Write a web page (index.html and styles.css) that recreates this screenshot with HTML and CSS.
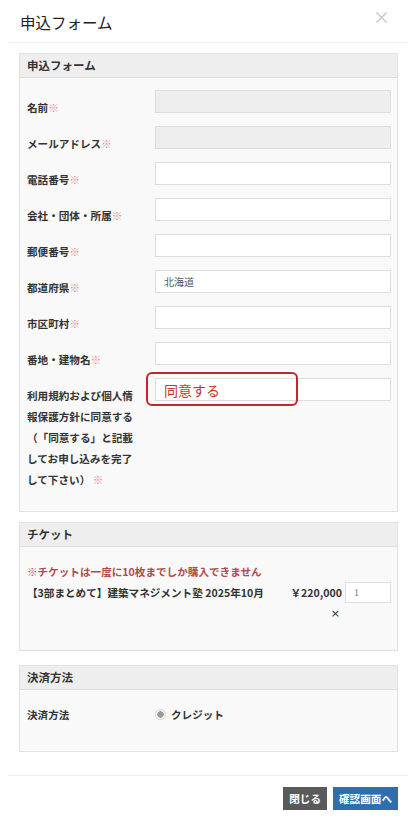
FILE: index.html
```html
<!DOCTYPE html>
<html lang="ja">
<head>
  <meta charset="UTF-8" />
  <meta name="viewport" content="width=device-width, initial-scale=1.0"/>
  <title>申込フォーム</title>
  <link rel="stylesheet" href="styles.css">
</head>
<body>
  <div class="modal">
    <div class="modal-header">
      <h4 class="modal-title">申込フォーム</h4>
      <span class="close">&times;</span>
    </div>

    <div class="modal-body">
      <div class="panel">
        <div class="panel-heading">申込フォーム</div>
        <div class="panel-body">
          <div class="form-row">
            <label class="control-label">名前<span class="req">※</span></label>
            <div class="control"><input class="form-control" type="text" disabled></div>
          </div>
          <div class="form-row">
            <label class="control-label">メールアドレス<span class="req">※</span></label>
            <div class="control"><input class="form-control" type="text" disabled></div>
          </div>
          <div class="form-row">
            <label class="control-label">電話番号<span class="req">※</span></label>
            <div class="control"><input class="form-control" type="text"></div>
          </div>
          <div class="form-row">
            <label class="control-label">会社・団体・所属<span class="req">※</span></label>
            <div class="control"><input class="form-control" type="text"></div>
          </div>
          <div class="form-row">
            <label class="control-label">郵便番号<span class="req">※</span></label>
            <div class="control"><input class="form-control" type="text"></div>
          </div>
          <div class="form-row">
            <label class="control-label">都道府県<span class="req">※</span></label>
            <div class="control"><input class="form-control" type="text" value="北海道"></div>
          </div>
          <div class="form-row">
            <label class="control-label">市区町村<span class="req">※</span></label>
            <div class="control"><input class="form-control" type="text"></div>
          </div>
          <div class="form-row">
            <label class="control-label">番地・建物名<span class="req">※</span></label>
            <div class="control"><input class="form-control" type="text"></div>
          </div>
          <div class="form-row">
            <label class="control-label">利用規約および個人情報保護方針に同意する（「同意する」と記載してお申し込みを完了して下さい） <span class="req">※</span></label>
            <div class="control">
              <input class="form-control agree" type="text" value="同意する">
              <span class="highlight"></span>
            </div>
          </div>
        </div>
      </div>

      <div class="panel">
        <div class="panel-heading">チケット</div>
        <div class="panel-body ticket-body">
          <p class="notice">※チケットは一度に10枚までしか購入できません</p>
          <div class="ticket-row">
            <span class="ticket-name">【3部まとめて】建築マネジメント塾 2025年10月</span>
            <div class="ticket-price">
              <span>￥220,000</span>
              <span class="times">×</span>
            </div>
            <input class="form-control qty" type="text" value="1">
          </div>
        </div>
      </div>

      <div class="panel panel-pay">
        <div class="panel-heading">決済方法</div>
        <div class="panel-body pay-body">
          <label class="control-label">決済方法</label>
          <label class="radio"><span class="radio-dot"></span>クレジット</label>
        </div>
      </div>
    </div>

    <div class="modal-footer">
      <button class="btn btn-close">閉じる</button>
      <button class="btn btn-primary">確認画面へ</button>
    </div>
  </div>
</body>
</html>
```

FILE: styles.css
```css
* {
  margin: 0;
  padding: 0;
  box-sizing: border-box;
}
body {
  font-family: "Noto Sans CJK JP", "Noto Sans", sans-serif;
  font-size: 10.6px;
  color: #333;
  background: #fff;
  text-spacing-trim: space-all;
}
.modal {
  margin: 0 8px;
}
.modal-header {
  display: flex;
  justify-content: space-between;
  align-items: flex-start;
  height: 43px;
  padding: 11px 12px 0 12px;
  border-bottom: 1px solid #eee;
}
.modal-title {
  font-size: 15.5px;
  font-weight: normal;
  line-height: 22px;
  color: #222;
}
.close {
  font-size: 17px;
  line-height: 12px;
  color: #c4c4c4;
  margin-right: 6px;
}
.modal-body {
  padding: 10px 10px 10px 11px;
}
.panel {
  background: #f9f9f9;
  border: 1px solid #e2e2e2;
  margin-bottom: 10px;
}
.panel:last-child {
  margin-bottom: 0;
}
.panel-pay {
  margin-top: 14px;
}
.panel-heading {
  background: #eee;
  border-bottom: 1px solid #ddd;
  height: 24px;
  line-height: 23px;
  padding: 0 7px;
  font-size: 11.5px;
  font-weight: bold;
  color: #333;
}
.panel-body {
  padding: 12px 6px 0 7px;
}
.form-row {
  display: flex;
  align-items: flex-start;
  gap: 18px;
  margin-bottom: 8px;
}
.form-row:last-child {
  margin-bottom: 21px;
}
.control-label {
  width: 110px;
  flex-shrink: 0;
  padding-top: 7px;
  line-height: 21px;
  font-weight: bold;
  color: #333;
}
.req {
  color: #e08a8a;
  font-weight: normal;
}
.control {
  flex: 1;
  position: relative;
}
.form-control {
  display: block;
  width: 100%;
  height: 23px;
  border: 1px solid #ddd;
  background: #fff;
  padding: 0 8px;
  font-family: inherit;
  font-size: 10px;
  color: #555;
  outline: none;
}
.form-control:disabled {
  background: #eee;
}
.agree {
  color: #c0392b;
  font-size: 14px;
}
.highlight {
  position: absolute;
  left: -9px;
  top: -6px;
  width: 152px;
  height: 34px;
  border: 2px solid #c1272d;
  border-radius: 6px;
}
.ticket-body {
  padding-top: 15px;
  padding-bottom: 26px;
}
.notice {
  color: #b24a4a;
  line-height: 20px;
  font-weight: bold;
}
.ticket-row {
  display: flex;
  align-items: flex-start;
}
.ticket-name {
  flex: 1;
  line-height: 21px;
  font-weight: bold;
}
.ticket-price {
  display: flex;
  flex-direction: column;
  align-items: flex-end;
  line-height: 21px;
  padding-right: 3px;
  font-weight: bold;
  color: #333;
}
.times {
  font-family: "DejaVu Sans", sans-serif;
  font-size: 11px;
  font-weight: normal;
  color: #333;
  padding-right: 2px;
}
.qty {
  width: 46px;
  height: 21px;
  font-family: "Liberation Serif", serif;
  color: #777;
}
.pay-body {
  display: flex;
  gap: 18px;
  padding-top: 10px;
  padding-bottom: 26px;
}
.pay-body .control-label {
  padding-top: 4px;
}
.radio {
  display: flex;
  align-items: center;
  gap: 5px;
  padding-top: 4px;
  line-height: 21px;
  font-weight: bold;
  color: #333;
}
.radio-dot {
  width: 11px;
  height: 11px;
  border-radius: 50%;
  border: 1px solid #d5d5d5;
  background: radial-gradient(circle, #9a9a9a 0 3px, #fff 3.5px);
}
.modal-footer {
  margin-top: 13px;
  border-top: 1px solid #eee;
  display: flex;
  justify-content: flex-end;
  gap: 6px;
  padding: 11px 10px 0 0;
}
.btn {
  height: 23px;
  border: none;
  padding: 0 6px;
  white-space: nowrap;
  font-family: inherit;
  font-size: 10.6px;
  font-weight: bold;
  color: #fff;
}
.btn-close {
  background: #5a5a5a;
}
.btn-primary {
  background: #2d6fad;
}
```
